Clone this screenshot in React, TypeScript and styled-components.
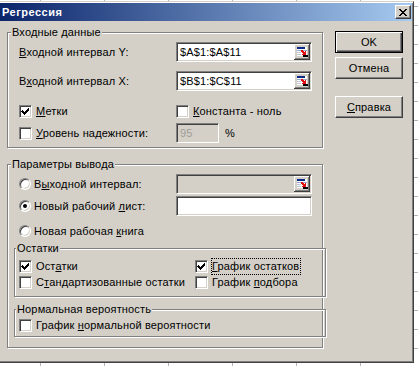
import React from 'react';
import styled, { createGlobalStyle } from 'styled-components';

const Global = createGlobalStyle`
  html, body { margin: 0; padding: 0; }
  body {
    width: 418px;
    height: 366px;
    overflow: hidden;
    background-color: #ffffff;
    background-image:
      linear-gradient(90deg, #b4b4b4 1px, transparent 1px),
      linear-gradient(180deg, #b4b4b4 1px, transparent 1px);
    background-size: 64px 19px, 64px 19px;
    background-position: 40px 6px, 40px 6px;
    font-family: "Liberation Sans", Arial, sans-serif;
    font-size: 11px;
  }
`;

const Window = styled.div`
  box-sizing: border-box;
  margin: 1px 0 0 -3px;
  width: 417px;
  height: 362px;
  padding: 1px;
  background: #d4d0c8;
  border: 1px solid;
  border-color: #d4d0c8 #404040 #404040 #d4d0c8;
  box-shadow: inset 1px 1px #ffffff, inset -1px -1px #808080;
  display: flex;
  flex-direction: column;
  color: #000;
  font-family: "Liberation Sans", Arial, sans-serif;
  font-size: 11px;
  line-height: 13px;
  letter-spacing: 0.15px;
`;

const TitleBar = styled.div`
  height: 18px;
  flex: none;
  display: flex;
  align-items: center;
  justify-content: space-between;
  padding: 0 1px 0 3px;
  background: linear-gradient(90deg, #0a246a 0%, #a6caf0 100%);
`;

const Title = styled.span`
  color: #ffffff;
  font-weight: bold;
  font-size: 11px;
  letter-spacing: 0.5px;
`;

const CaptionButton = styled.span`
  box-sizing: border-box;
  width: 16px;
  height: 14px;
  display: flex;
  align-items: center;
  justify-content: center;
  background: #d4d0c8;
  border: 1px solid;
  border-color: #ffffff #404040 #404040 #ffffff;
  box-shadow: inset -1px -1px #808080;
`;

const Body = styled.div`
  flex: 1;
  display: flex;
  align-items: flex-start;
  padding: 0 7px 0 8px;
`;

const MainColumn = styled.div`
  width: 317px;
  display: flex;
  flex-direction: column;
`;

const ButtonColumn = styled.div`
  width: 68px;
  margin-left: 11px;
  padding-top: 10px;
  display: flex;
  flex-direction: column;
`;

const Group = styled.div<{ $mt: number; $mx?: number; $pb: number; $pl: number }>`
  box-sizing: border-box;
  margin: ${p => p.$mt}px ${p => (p.$mx ?? 0) + 1}px 0 ${p => p.$mx ?? 0}px;
  padding: 0 0 ${p => p.$pb}px ${p => p.$pl}px;
  border: 1px solid #808080;
  box-shadow: inset 1px 1px #ffffff, 1px 1px #ffffff;
  display: flex;
  flex-direction: column;
`;

const Legend = styled.span<{ $offset: number }>`
  align-self: flex-start;
  margin: -7px 0 0 ${p => p.$offset}px;
  padding: 0 1px;
  height: 13px;
  line-height: 13px;
  background: #d4d0c8;
  white-space: nowrap;
`;

const Row = styled.div<{ $mt: number; $h: number }>`
  display: flex;
  align-items: center;
  margin-top: ${p => p.$mt}px;
  height: ${p => p.$h}px;
`;

const Cell = styled.div<{ $w: number }>`
  width: ${p => p.$w}px;
  flex: none;
  display: flex;
  align-items: center;
  white-space: nowrap;
`;

const Mn = styled.span`
  text-decoration: underline;
  text-underline-offset: 1px;
`;

const Field = styled.div<{ $w: number; $disabled?: boolean }>`
  box-sizing: border-box;
  width: ${p => p.$w}px;
  height: 20px;
  flex: none;
  display: flex;
  align-items: center;
  justify-content: space-between;
  padding: 1px 2px 1px 3px;
  background: ${p => (p.$disabled ? '#d4d0c8' : '#ffffff')};
  color: ${p => (p.$disabled ? '#a09d97' : '#000000')};
  border: 1px solid;
  border-color: #808080 #ffffff #ffffff #808080;
  box-shadow: inset 1px 1px #404040, inset -1px -1px #d4d0c8;
  white-space: nowrap;
`;

const RangeBtn = styled.span`
  width: 16px;
  height: 16px;
  flex: none;
  display: block;
  margin-right: -1px;
`;

const Box = styled.span`
  box-sizing: border-box;
  width: 13px;
  height: 13px;
  flex: none;
  display: flex;
  align-items: center;
  justify-content: center;
  background: #ffffff;
  border: 1px solid;
  border-color: #808080 #ffffff #ffffff #808080;
  box-shadow: inset 1px 1px #404040, inset -1px -1px #d4d0c8;
  margin-right: 4px;
`;

const Radio = styled.span<{ $on?: boolean }>`
  box-sizing: border-box;
  width: 12px;
  height: 12px;
  flex: none;
  border-radius: 50%;
  background: #ffffff;
  border: 1px solid;
  border-color: #808080 #ffffff #ffffff #808080;
  box-shadow: inset 1px 1px #404040, inset -1px -1px #d4d0c8;
  margin-right: 3px;
  display: flex;
  align-items: center;
  justify-content: center;
  &::after {
    content: '';
    display: ${p => (p.$on ? 'block' : 'none')};
    width: 4px;
    height: 4px;
    border-radius: 50%;
    background: #000;
  }
`;

const Focus = styled.span`
  outline: 1px dotted #000;
  outline-offset: 0px;
  padding: 1px 1px 1px 0;
`;

const Unit = styled.span`
  margin-left: 6px;
`;

const Button = styled.div<{ $default?: boolean; $mt: number }>`
  box-sizing: border-box;
  height: 22px;
  margin-top: ${p => p.$mt}px;
  display: flex;
  align-items: center;
  justify-content: center;
  background: #d4d0c8;
  border: 1px solid;
  border-color: ${p => (p.$default ? '#000000' : '#ffffff #404040 #404040 #ffffff')};
  box-shadow: ${p =>
    p.$default
      ? 'inset 1px 1px #ffffff, inset -1px -1px #404040, inset -2px -2px #808080'
      : 'inset -1px -1px #808080'};
`;

const CheckMark = () => (
  <svg width="9" height="9" viewBox="0 0 9 9" shapeRendering="crispEdges">
    <path d="M1 3h1v1h1v1h1v-1h1v-1h1v-1h1v-1h1v3h-1v1h-1v1h-1v1h-1v1h-1v-1h-1v-1h-1v-1h-1z" fill="#000" />
  </svg>
);

const Check = ({ on }: { on?: boolean }) => <Box>{on ? <CheckMark /> : null}</Box>;

const RangeIcon = () => (
  <RangeBtn>
    <svg width="16" height="16" viewBox="0 0 16 16" shapeRendering="crispEdges">
      <rect x="0" y="0" width="16" height="16" fill="#d4d0c8" />
      <rect x="0" y="0" width="15" height="1" fill="#ffffff" />
      <rect x="0" y="0" width="1" height="15" fill="#ffffff" />
      <rect x="0" y="15" width="16" height="1" fill="#404040" />
      <rect x="15" y="0" width="1" height="16" fill="#404040" />
      <rect x="1" y="14" width="14" height="1" fill="#808080" />
      <rect x="14" y="1" width="1" height="14" fill="#808080" />
      <rect x="3" y="3" width="10" height="9" fill="#ffffff" />
      <rect x="3" y="3" width="8" height="2" fill="#0a2a8a" />
      <rect x="3" y="6" width="10" height="1" fill="#9aa6c8" />
      <rect x="3" y="8" width="4" height="1" fill="#c0c8d8" />
      <rect x="3" y="10" width="4" height="1" fill="#c0c8d8" />
      <path d="M7 6h2v1h1v1h1v-1h1v4h-4v-1h1v-1h-1v-1h-1z" fill="#e01010" />
      <rect x="9" y="11" width="5" height="2" fill="#000000" />
    </svg>
  </RangeBtn>
);

export default function App() {
  return (
    <>
      <Global />
      <Window>
        <TitleBar>
          <Title>Регрессия</Title>
          <CaptionButton>
            <svg width="8" height="7" viewBox="0 0 8 7" shapeRendering="crispEdges">
              <path d="M0 0h2v1h1v1h2v-1h1v-1h2v1h-1v1h-1v1h-1v1h1v1h1v1h1v1h-2v-1h-1v-1h-2v1h-1v1h-2v-1h1v-1h1v-1h1v-1h-1v-1h-1v-1h-1z" fill="#000" />
            </svg>
          </CaptionButton>
        </TitleBar>
        <Body>
          <MainColumn>
            <Group $mt={11} $pb={4} $pl={11}>
              <Legend $offset={-8}>Входные данные</Legend>
              <Row $mt={3} $h={20}>
                <Cell $w={157}>
                  <span><Mn>В</Mn>ходной интервал Y:</span>
                </Cell>
                <Field $w={136}>
                  <span>$A$1:$A$11</span>
                  <RangeIcon />
                </Field>
              </Row>
              <Row $mt={9} $h={20}>
                <Cell $w={157}>
                  <span>В<Mn>х</Mn>одной интервал X:</span>
                </Cell>
                <Field $w={136}>
                  <span>$B$1:$C$11</span>
                  <RangeIcon />
                </Field>
              </Row>
              <Row $mt={12} $h={16}>
                <Cell $w={157}>
                  <Check on />
                  <span><Mn>М</Mn>етки</span>
                </Cell>
                <Cell $w={136}>
                  <Check />
                  <span><Mn>К</Mn>онстанта - ноль</span>
                </Cell>
              </Row>
              <Row $mt={4} $h={20}>
                <Cell $w={157}>
                  <Check />
                  <span><Mn>У</Mn>ровень надежности:</span>
                </Cell>
                <Field $w={43} $disabled>
                  <span>95</span>
                </Field>
                <Unit>%</Unit>
              </Row>
            </Group>

            <Group $mt={16} $pb={10} $pl={11}>
              <Legend $offset={-8}>Параметры вывода</Legend>
              <Row $mt={3} $h={20}>
                <Cell $w={157}>
                  <Radio />
                  <span>В<Mn>ы</Mn>ходной интервал:</span>
                </Cell>
                <Field $w={136} $disabled>
                  <span />
                  <RangeIcon />
                </Field>
              </Row>
              <Row $mt={2} $h={20}>
                <Cell $w={157}>
                  <Radio $on />
                  <span>Новый рабочий <Mn>л</Mn>ист:</span>
                </Cell>
                <Field $w={136} />
              </Row>
              <Row $mt={7} $h={16}>
                <Cell $w={200}>
                  <Radio />
                  <span>Новая рабочая <Mn>к</Mn>нига</span>
                </Cell>
              </Row>

              <Group $mt={9} $mx={-5} $pb={6} $pl={4}>
                <Legend $offset={-3}>Остатки</Legend>
                <Row $mt={3} $h={16}>
                  <Cell $w={176}>
                    <Check on />
                    <span>Ост<Mn>а</Mn>тки</span>
                  </Cell>
                  <Cell $w={110}>
                    <Check on />
                    <Focus><Mn>Г</Mn>рафик остатков</Focus>
                  </Cell>
                </Row>
                <Row $mt={0} $h={16}>
                  <Cell $w={176}>
                    <Check />
                    <span>С<Mn>т</Mn>андартизованные остатки</span>
                  </Cell>
                  <Cell $w={110}>
                    <Check />
                    <span>График <Mn>п</Mn>одбора</span>
                  </Cell>
                </Row>
              </Group>

              <Group $mt={12} $mx={-5} $pb={3} $pl={4}>
                <Legend $offset={-3}>Нормальная вероятность</Legend>
                <Row $mt={1} $h={16}>
                  <Cell $w={250}>
                    <Check />
                    <span>График <Mn>н</Mn>ормальной вероятности</span>
                  </Cell>
                </Row>
              </Group>
            </Group>
          </MainColumn>

          <ButtonColumn>
            <Button $default $mt={0}>OK</Button>
            <Button $mt={4}>Отмена</Button>
            <Button $mt={17}><span><Mn>С</Mn>правка</span></Button>
          </ButtonColumn>
        </Body>
      </Window>
    </>
  );
}
